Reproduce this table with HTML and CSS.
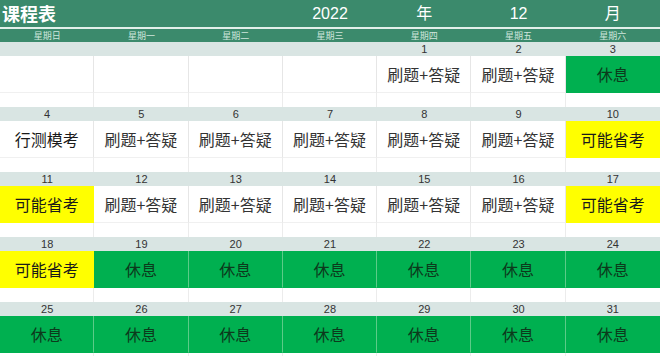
FILE: index.html
```html
<!DOCTYPE html>
<html lang="zh-CN">
<head>
<meta charset="utf-8">
<title>课程表</title>
<link rel="stylesheet" href="styles.css">
</head>
<body>
<div class="page">
  <div class="titlebar">
    <div class="title">课程表</div>
    <div></div><div></div>
    <div class="tv">2022</div>
    <div class="tv">年</div>
    <div class="tv">12</div>
    <div class="tv">月</div>
  </div>
  <div class="weekdays">
    <div>星期日</div><div>星期一</div><div>星期二</div><div>星期三</div><div>星期四</div><div>星期五</div><div>星期六</div>
  </div>

  <div class="week">
    <div class="d"></div><div class="d"></div><div class="d"></div><div class="d"></div><div class="d">1</div><div class="d">2</div><div class="d">3</div>
    <div class="c"></div><div class="c"></div><div class="c"></div><div class="c"></div><div class="c">刷题+答疑</div><div class="c">刷题+答疑</div><div class="c g">休息</div>
    <div class="s"></div><div class="s"></div><div class="s"></div><div class="s"></div><div class="s"></div><div class="s"></div><div class="s"></div>
  </div>

  <div class="week">
    <div class="d">4</div><div class="d">5</div><div class="d">6</div><div class="d">7</div><div class="d">8</div><div class="d">9</div><div class="d">10</div>
    <div class="c k">行测模考</div><div class="c">刷题+答疑</div><div class="c">刷题+答疑</div><div class="c">刷题+答疑</div><div class="c">刷题+答疑</div><div class="c">刷题+答疑</div><div class="c y">可能省考</div>
    <div class="s"></div><div class="s"></div><div class="s"></div><div class="s"></div><div class="s"></div><div class="s"></div><div class="s"></div>
  </div>

  <div class="week">
    <div class="d">11</div><div class="d">12</div><div class="d">13</div><div class="d">14</div><div class="d">15</div><div class="d">16</div><div class="d">17</div>
    <div class="c y">可能省考</div><div class="c">刷题+答疑</div><div class="c">刷题+答疑</div><div class="c">刷题+答疑</div><div class="c">刷题+答疑</div><div class="c">刷题+答疑</div><div class="c y">可能省考</div>
    <div class="s"></div><div class="s"></div><div class="s"></div><div class="s"></div><div class="s"></div><div class="s"></div><div class="s"></div>
  </div>

  <div class="week">
    <div class="d">18</div><div class="d">19</div><div class="d">20</div><div class="d">21</div><div class="d">22</div><div class="d">23</div><div class="d">24</div>
    <div class="c y">可能省考</div><div class="c g">休息</div><div class="c g">休息</div><div class="c g">休息</div><div class="c g">休息</div><div class="c g">休息</div><div class="c g">休息</div>
    <div class="s"></div><div class="s"></div><div class="s"></div><div class="s"></div><div class="s"></div><div class="s"></div><div class="s"></div>
  </div>

  <div class="week">
    <div class="d">25</div><div class="d">26</div><div class="d">27</div><div class="d">28</div><div class="d">29</div><div class="d">30</div><div class="d">31</div>
    <div class="c g">休息</div><div class="c g">休息</div><div class="c g">休息</div><div class="c g">休息</div><div class="c g">休息</div><div class="c g">休息</div><div class="c g">休息</div>
    <div class="s"></div><div class="s"></div><div class="s"></div><div class="s"></div><div class="s"></div><div class="s"></div><div class="s"></div>
  </div>
</div>
</body>
</html>
```

FILE: styles.css
```css
html, body {
  margin: 0;
  padding: 0;
  background: #ffffff;
  overflow: hidden;
}
body {
  width: 660px;
  height: 356px;
  font-family: "Noto Sans CJK SC", "Noto Sans", sans-serif;
}
.page {
  width: 660px;
}
.titlebar {
  display: grid;
  grid-template-columns: repeat(7, 1fr);
  height: 27px;
  background: #3b8a6c;
  color: #ffffff;
  align-items: center;
}
.title {
  font-size: 18px;
  font-weight: bold;
  padding-left: 2px;
  white-space: nowrap;
  line-height: 27px;
}
.tv {
  text-align: center;
  font-family: "Liberation Sans", "Noto Sans CJK SC", sans-serif;
  font-size: 16px;
  line-height: 27px;
}
.weekdays {
  display: grid;
  grid-template-columns: repeat(7, 1fr);
  height: 13px;
  background: #3b8a6c;
  border-top: 2px solid #e2f0ea;
  color: #cfe6dc;
  font-size: 9px;
  line-height: 13px;
  text-align: center;
}
.week {
  display: grid;
  grid-template-columns: repeat(7, 1fr);
  grid-template-rows: 14px 37px 14px;
}
.d {
  background: #d9e5e3;
  color: #333333;
  font-family: "Liberation Sans", "Noto Sans CJK SC", sans-serif;
  font-size: 11px;
  line-height: 14px;
  text-align: center;
}
.c {
  display: flex;
  align-items: center;
  justify-content: center;
  font-size: 16px;
  color: #333333;
  border-right: 1px solid #e6e6e6;
  border-bottom: 1px solid #f0f0f0;
  white-space: nowrap;
}
.c:nth-child(14) {
  border-right: none;
}
.c.k {
  color: #1a1a1a;
}
.c.g {
  background: #00b050;
  color: #0c3a1c;
  border-right-color: #5ccb88;
  border-bottom-color: #00b050;
}
.c.y {
  background: #ffff00;
  color: #1a1a1a;
  border-right-color: #ffff00;
  border-bottom-color: #ffff00;
}
.s {
  border-right: 1px solid #ececec;
}
.s:nth-child(21) {
  border-right: none;
}
```
